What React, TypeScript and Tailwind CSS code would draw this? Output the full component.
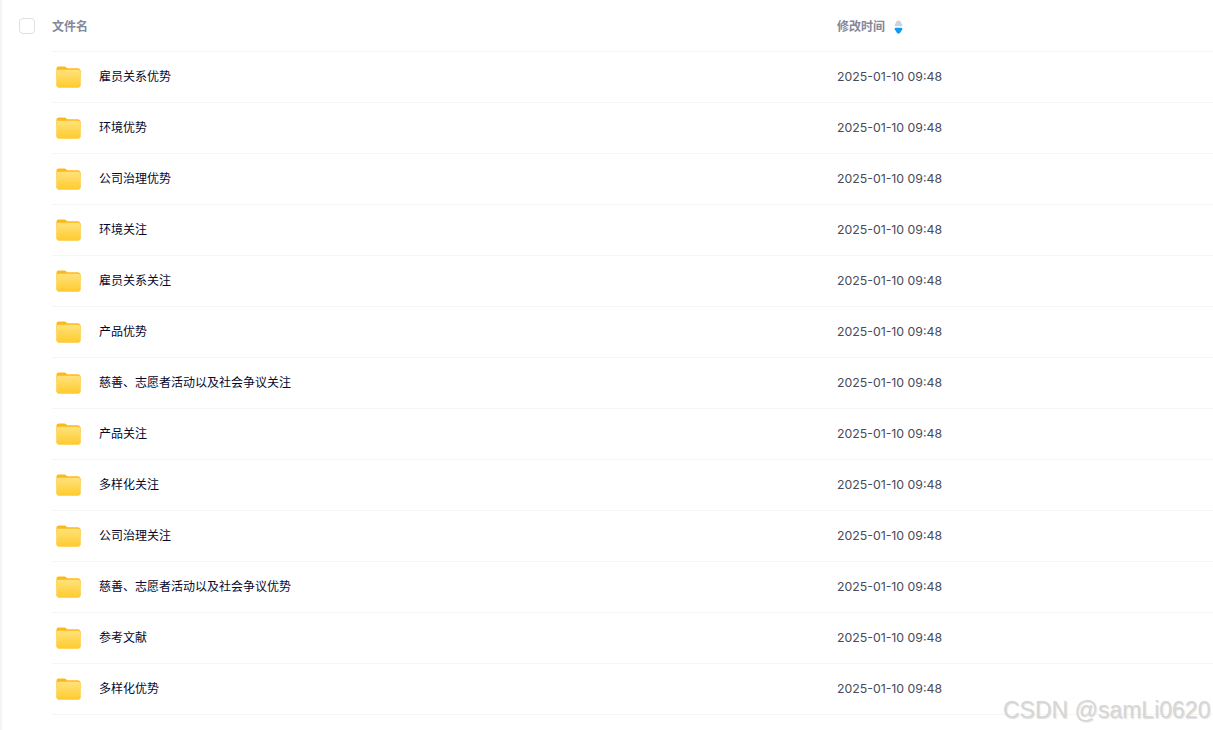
import React from 'react';

const rows = [
  '雇员关系优势',
  '环境优势',
  '公司治理优势',
  '环境关注',
  '雇员关系关注',
  '产品优势',
  '慈善、志愿者活动以及社会争议关注',
  '产品关注',
  '多样化关注',
  '公司治理关注',
  '慈善、志愿者活动以及社会争议优势',
  '参考文献',
  '多样化优势',
];

const FolderIcon: React.FC = () => (
  <svg width="25" height="22" viewBox="0 0 25 22" fill="none">
    <defs>
      <linearGradient id="folderFront" x1="0" y1="0" x2="0" y2="1">
        <stop offset="0" stopColor="#ffe27a" />
        <stop offset="1" stopColor="#ffcb2e" />
      </linearGradient>
    </defs>
    <path
      d="M0.5 2.5C0.5 1.2 1.5 0.4 2.7 0.4h5.6c.8 0 1.4.3 1.9.8l1 1.1h10.5c1.7 0 2.8 1.1 2.8 2.8V10H0.5V2.5z"
      fill="#ffb81c"
    />
    <rect x="0.5" y="3" width="24" height="18.5" rx="2.5" fill="#ffc233" />
    <rect x="0.5" y="4" width="24" height="17.5" rx="2.2" fill="url(#folderFront)" />
  </svg>
);

const SortIcon: React.FC = () => (
  <svg width="9" height="14" viewBox="0 0 9 14">
    <path d="M2.8 1.2C3.6 0.1 5.4 0.1 6.2 1.2L8.2 4.4C8.7 5.3 8.2 6.2 7.1 6.2H1.9C0.8 6.2 0.3 5.3 0.8 4.4L2.8 1.2z" fill="#ced2da" />
    <path d="M2.8 12.8C3.6 13.9 5.4 13.9 6.2 12.8L8.2 9.6C8.7 8.7 8.2 7.8 7.1 7.8H1.9C0.8 7.8 0.3 8.7 0.8 9.6L2.8 12.8z" fill="#0f9bf5" />
  </svg>
);

const App: React.FC = () => {
  return (
    <div
      className="relative h-[730px] w-full overflow-hidden bg-white"
      style={{ fontFamily: '"Inter", "Noto Sans CJK SC", sans-serif' }}
    >
      <div className="h-full border-l-2 border-[#f4f4f5] pl-[50px]">
        {/* Header */}
        <div className="relative flex h-[52px] items-center border-b border-[#f5f5f6] pt-[2px]">
          <span className="absolute left-[-33px] top-[18px] h-4 w-4 rounded-[4px] border border-[#dcdfe6] bg-white" />
          <span className="w-[785px] text-xs font-bold text-[#84889a]">文件名</span>
          <span className="text-xs font-bold text-[#84889a]">修改时间</span>
          <span className="ml-[9px] flex items-center">
            <SortIcon />
          </span>
        </div>

        {/* Rows */}
        {rows.map((name) => (
          <div key={name} className="flex h-[51px] items-center border-b border-[#f5f5f6]">
            <span className="ml-[4px] flex w-[43px] items-center">
              <FolderIcon />
            </span>
            <span className="w-[738px] text-xs text-[#05082c]">{name}</span>
            <span className="pt-[1px] text-[12.3px] text-[#484b58]">2025-01-10 09:48</span>
          </div>
        ))}
      </div>

      {/* Watermark */}
      <span
        className="absolute left-[1003px] top-[696px] text-[23px] leading-[28px] whitespace-nowrap text-[#d6d6d6]"
        style={{ fontFamily: '"Liberation Sans", sans-serif', textShadow: '1px 1px 1px #e0e0e0' }}
      >
        CSDN @samLi0620
      </span>
    </div>
  );
};

export default App;
